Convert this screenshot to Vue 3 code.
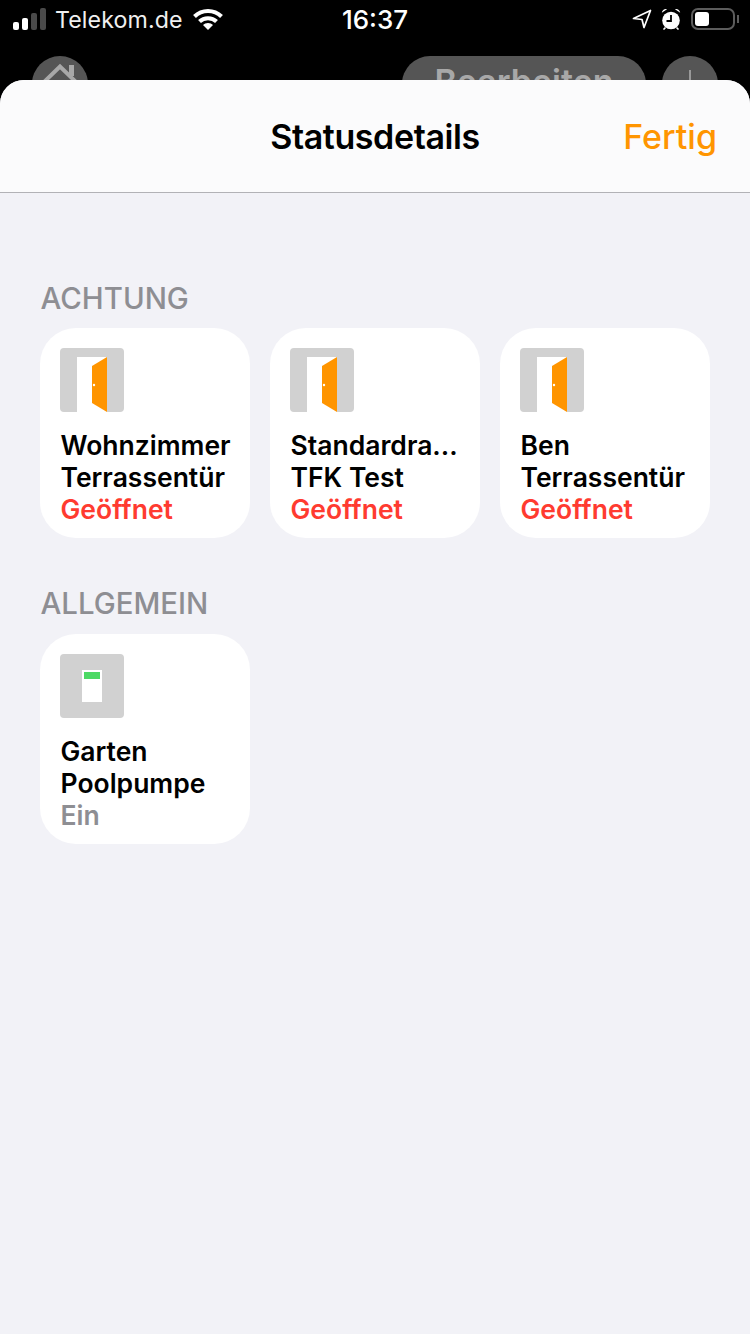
<script setup>
const warn = [
  { id: 1, a: 'Wohnzimmer', b: 'Terrassentür', s: 'Geöffnet' },
  { id: 2, a: 'Standardra...', b: 'TFK Test', s: 'Geöffnet' },
  { id: 3, a: 'Ben', b: 'Terrassentür', s: 'Geöffnet' },
]
</script>

<template>
  <div class="page">
    <div class="status">
      <div class="st-left">
        <svg class="signal" width="34" height="22" viewBox="0 0 34 22">
          <rect x="0" y="14" width="6" height="8" rx="2" fill="#fff" />
          <rect x="9" y="10" width="6" height="12" rx="2" fill="#fff" />
          <rect x="18" y="5" width="6" height="17" rx="2" fill="#4a4a4a" />
          <rect x="27" y="0" width="6" height="22" rx="2" fill="#4a4a4a" />
        </svg>
        <span class="carrier">Telekom.de</span>
        <svg class="wifi" width="30" height="22" viewBox="0 0 30 22" fill="none" stroke="#fff" stroke-width="4">
          <path d="M1.500 8.500C9 1 21 1 28.500 8.500" />
          <path d="M6.500 13.500C11 9 19 9 23.500 13.500" />
          <path d="M15 22l-5-5c2.500-2.700 7.500-2.700 10 0z" fill="#fff" stroke="none" />
        </svg>
      </div>
      <div class="st-time">16:37</div>
      <div class="st-right">
        <svg width="20" height="20" viewBox="0 0 20 20" fill="none" stroke="#fff" stroke-width="1.700" stroke-linejoin="round">
          <path d="M1.500 9.500L18.500 1.500L12 18.500L10 10.500z" />
        </svg>
        <svg width="20" height="22" viewBox="0 0 20 22">
          <circle cx="10" cy="12.500" r="8.800" fill="#fff" />
          <path d="M10 7V13H5.500" fill="none" stroke="#000" stroke-width="1.800" />
          <path d="M0.800 4.800C1.200 2 3.600 .6 6 1.200zM19.200 4.800C18.800 2 16.400 .6 14 1.200z" fill="#fff" />
          <path d="M4.500 19.500l-2 2M15.500 19.500l2 2" stroke="#fff" stroke-width="1.600" />
        </svg>
        <div class="battery"><div class="level"></div></div>
        <div class="nub"></div>
      </div>
    </div>

    <div class="behind">
      <div class="circle home">
        <svg width="56" height="56" viewBox="0 0 56 56" fill="none" stroke="#a8a8a8" stroke-width="4">
          <path d="M11 27L28 10.500L45 27" />
          <path d="M39.500 20V9" stroke-width="5" />
        </svg>
      </div>
      <div class="behind-right">
        <div class="pill">Bearbeiten</div>
        <div class="circle plus"><span class="bar"></span></div>
      </div>
    </div>

    <div class="sheet">
      <header class="head">
        <div class="title">Statusdetails</div>
        <div class="done">Fertig</div>
      </header>
      <main class="body">
        <section class="sec first">
          <h2 class="sec-title">ACHTUNG</h2>
          <div class="grid">
            <article v-for="c in warn" :key="c.id" class="card">
              <svg class="tile" width="64" height="64" viewBox="0 0 64 64">
                <rect width="64" height="64" rx="4" fill="#d1d1d1" />
                <rect x="17" y="9" width="30" height="55" fill="#fff" />
                <path d="M32 18L47 9V64L32 55z" fill="#ff9500" />
                <circle cx="34" cy="37" r="1.200" fill="#fff" />
              </svg>
              <div class="name">{{ c.a }}</div>
              <div class="name">{{ c.b }}</div>
              <div class="state red">{{ c.s }}</div>
            </article>
          </div>
        </section>
        <section class="sec">
          <h2 class="sec-title">ALLGEMEIN</h2>
          <div class="grid">
            <article class="card">
              <svg class="tile" width="64" height="64" viewBox="0 0 64 64">
                <rect width="64" height="64" rx="4" fill="#d1d1d1" />
                <rect x="22" y="16" width="20" height="32" fill="#fff" />
                <rect x="24" y="18" width="16" height="7" fill="#4cd964" />
              </svg>
              <div class="name">Garten</div>
              <div class="name">Poolpumpe</div>
              <div class="state grey">Ein</div>
            </article>
          </div>
        </section>
      </main>
    </div>
  </div>
</template>

<style>
html, body { margin: 0; background: #000; }
</style>

<style scoped>
.page {
  width: 750px;
  height: 1334px;
  display: flex;
  flex-direction: column;
  overflow: hidden;
  background: #000;
  font-family: Inter, "Noto Sans", "Liberation Sans", sans-serif;
}
.status {
  height: 40px;
  display: grid;
  grid-template-columns: 1fr auto 1fr;
  align-items: center;
  color: #fff;
}
.st-left { display: flex; align-items: center; padding-left: 13px; }
.signal { margin-right: 8px; margin-top: -2px; }
.carrier { font-size: 23.200px; letter-spacing: 0.1px; margin-top: -1px; color: #f0f0f0; }
.wifi { margin-left: 10px; margin-top: -2px; }
.st-time { font-size: 26px; font-weight: 500; margin-top: -1px; }
.st-right { display: flex; align-items: center; justify-content: flex-end; padding-right: 11px; }
.st-right svg { margin-right: 9px; margin-top: -2px; }
.battery {
  width: 44px;
  height: 22px;
  box-sizing: border-box;
  border: 2px solid #5c5c5c;
  border-radius: 7px;
  padding: 2px;
  margin-left: 1px;
  margin-top: -2px;
}
.level { width: 14px; height: 14px; background: #fff; border-radius: 3px; }
.nub { width: 2px; height: 8px; background: #5c5c5c; margin-left: 2px; margin-top: -2px; }
.behind {
  height: 40px;
  padding: 16px 32px 0;
  box-sizing: border-box;
  display: flex;
  justify-content: space-between;
  overflow: hidden;
}
.behind-right { display: flex; gap: 16px; }
.circle {
  width: 56px;
  height: 56px;
  border-radius: 50%;
  background: #555;
  flex: none;
}
.plus { position: relative; }
.bar { position: absolute; left: 27px; top: 14px; width: 2px; height: 30px; background: #999; }
.pill {
  width: 244px;
  height: 56px;
  border-radius: 28px;
  background: #555;
  color: #a8a8a8;
  font-size: 34px;
  font-weight: 600;
  text-align: center;
  line-height: 52px;
}
.sheet {
  flex: 1;
  display: flex;
  flex-direction: column;
  border-radius: 24px 24px 0 0;
  overflow: hidden;
  background: #f2f2f7;
}
.head {
  height: 113px;
  box-sizing: border-box;
  flex: none;
  display: flex;
  align-items: center;
  justify-content: center;
  position: relative;
  background: #fbfbfc;
  border-bottom: 1px solid #b2b2b6;
}
.title { font-size: 34px; font-weight: 600; color: #000; letter-spacing: -0.4px; }
.done {
  position: absolute;
  right: 33px;
  top: 36px;
  font-size: 34px;
  font-weight: 500;
  color: #ff9500;
  letter-spacing: 0;
}
.body { padding: 0 40px; }
.sec { margin-top: 48px; }
.sec.first { margin-top: 88px; }
.sec-title {
  margin: 0 0 13px 0.5px;
  font-size: 29.400px;
  line-height: 35px;
  font-weight: 500;
  color: #8e8e93;
}
.first .sec-title { margin-bottom: 12px; }
.grid { display: flex; gap: 20px; }
.card {
  width: 210px;
  height: 210px;
  box-sizing: border-box;
  padding: 20px;
  background: #fff;
  border-radius: 36px;
}
.tile { display: block; margin-bottom: 17px; }
.name, .state {
  font-size: 26.500px;
  line-height: 32px;
  font-weight: 600;
  white-space: nowrap;
  margin-left: 0.5px;
}
.name { color: #000; }
.red { color: #ff3b30; }
.grey { color: #8e8e93; }
</style>
